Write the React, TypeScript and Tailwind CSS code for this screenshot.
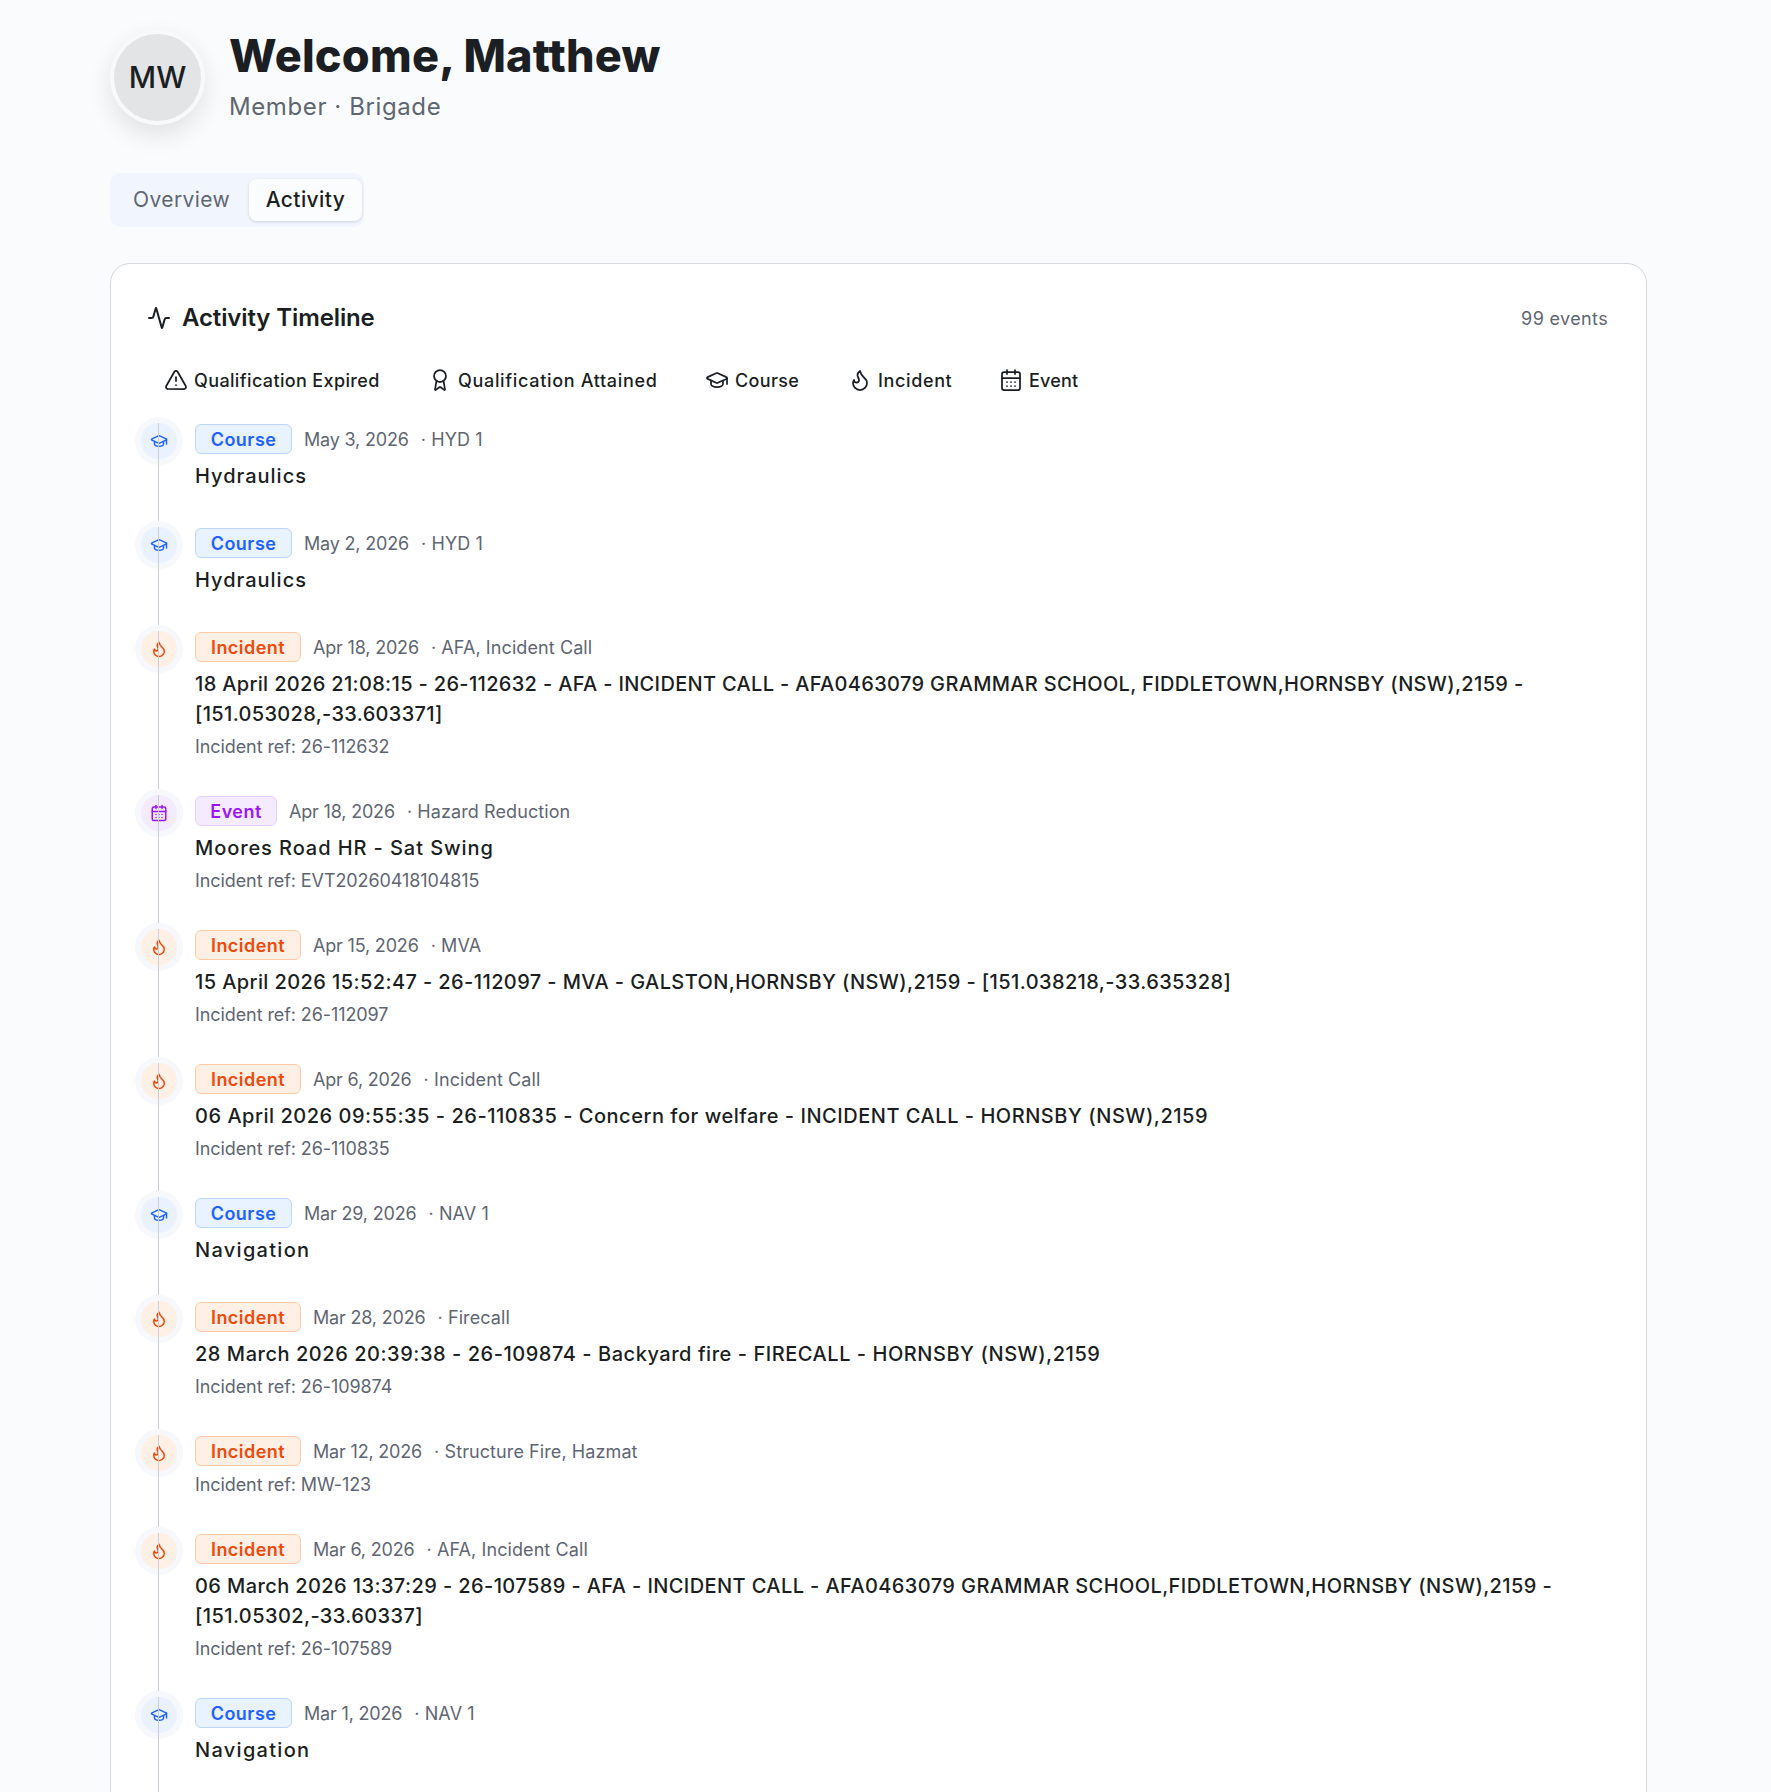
import { Activity, Award, CalendarDays, Flame, GraduationCap, TriangleAlert } from "lucide-react";

type Kind = "course" | "incident" | "event";

const kinds = {
  course: {
    label: "Course",
    Icon: GraduationCap,
    circle: "bg-[#eaf2ff] text-[#1f62ff]",
    badge: "w-[97px] bg-[#e9f2ff] border-[#bcd6ff] text-[#1f62ff]",
  },
  incident: {
    label: "Incident",
    Icon: Flame,
    circle: "bg-[#fff0e6] text-[#f0490c]",
    badge: "w-[106px] bg-[#fff0e6] border-[#ffc9a6] text-[#f0490c]",
  },
  event: {
    label: "Event",
    Icon: CalendarDays,
    circle: "bg-[#f5ebff] text-[#9a16f5]",
    badge: "w-[82px] bg-[#f5ebff] border-[#e5cfff] text-[#9a16f5]",
  },
};

const items: { kind: Kind; date: string; meta: string; title?: string; spacing?: string; ref?: string }[] = [
  { kind: "course", date: "May 3, 2026", meta: "HYD 1", title: "Hydraulics", spacing: "tracking-[0.05em]" },
  { kind: "course", date: "May 2, 2026", meta: "HYD 1", title: "Hydraulics", spacing: "tracking-[0.05em]" },
  {
    kind: "incident",
    date: "Apr 18, 2026",
    meta: "AFA, Incident Call",
    title:
      "18 April 2026 21:08:15 - 26-112632 - AFA - INCIDENT CALL - AFA0463079 GRAMMAR SCHOOL, FIDDLETOWN,HORNSBY (NSW),2159 - [151.053028,-33.603371]",
    spacing: "tracking-[0.0165em]",
    ref: "26-112632",
  },
  {
    kind: "event",
    date: "Apr 18, 2026",
    meta: "Hazard Reduction",
    title: "Moores Road HR - Sat Swing",
    spacing: "tracking-[0.046em]",
    ref: "EVT20260418104815",
  },
  {
    kind: "incident",
    date: "Apr 15, 2026",
    meta: "MVA",
    title: "15 April 2026 15:52:47 - 26-112097 - MVA - GALSTON,HORNSBY (NSW),2159 - [151.038218,-33.635328]",
    spacing: "tracking-[0.02em]",
    ref: "26-112097",
  },
  {
    kind: "incident",
    date: "Apr 6, 2026",
    meta: "Incident Call",
    title: "06 April 2026 09:55:35 - 26-110835 - Concern for welfare - INCIDENT CALL - HORNSBY (NSW),2159",
    spacing: "tracking-[0.026em]",
    ref: "26-110835",
  },
  { kind: "course", date: "Mar 29, 2026", meta: "NAV 1", title: "Navigation", spacing: "tracking-[0.065em]" },
  {
    kind: "incident",
    date: "Mar 28, 2026",
    meta: "Firecall",
    title: "28 March 2026 20:39:38 - 26-109874 - Backyard fire - FIRECALL - HORNSBY (NSW),2159",
    spacing: "tracking-[0.027em]",
    ref: "26-109874",
  },
  { kind: "incident", date: "Mar 12, 2026", meta: "Structure Fire, Hazmat", ref: "MW-123" },
  {
    kind: "incident",
    date: "Mar 6, 2026",
    meta: "AFA, Incident Call",
    title:
      "06 March 2026 13:37:29 - 26-107589 - AFA - INCIDENT CALL - AFA0463079 GRAMMAR SCHOOL,FIDDLETOWN,HORNSBY (NSW),2159 - [151.05302,-33.60337]",
    spacing: "tracking-[0.02em]",
    ref: "26-107589",
  },
  { kind: "course", date: "Mar 1, 2026", meta: "NAV 1", title: "Navigation", spacing: "tracking-[0.065em]" },
];

const legend = [
  { label: "Qualification Expired", Icon: TriangleAlert, cls: "w-[264px] tracking-[0.02em]" },
  { label: "Qualification Attained", Icon: Award, cls: "w-[277px] tracking-[0.037em]" },
  { label: "Course", Icon: GraduationCap, cls: "w-[143px] tracking-[0.02em]" },
  { label: "Incident", Icon: Flame, cls: "w-[151px] tracking-[0.035em]" },
  { label: "Event", Icon: CalendarDays, cls: "tracking-[0.01em]" },
];

export default function App() {
  return (
    <div className="h-[1792px] overflow-hidden bg-[#fafbfd] pl-[110px] pr-[124px] font-['Inter',sans-serif] text-[#1b1f23]">
      <div className="flex gap-[24px] pt-[30px]">
        <div className="flex size-[95px] shrink-0 items-center justify-center rounded-full border-[4px] border-[#f8f9fb] bg-[#e3e4e6] text-[30px] font-medium shadow-[0_10px_24px_rgba(0,0,0,0.1)]">
          MW
        </div>
        <div className="-mt-[2px]">
          <h1 className="text-[45px] font-extrabold leading-[56px] tracking-[0.005em]">Welcome, Matthew</h1>
          <p className="mt-[5px] text-[24px] leading-[36px] tracking-[0.025em] text-[#5f6673]">Member · Brigade</p>
        </div>
      </div>

      <div className="mt-[48px] flex h-[54px] w-[254px] items-center rounded-[10px] bg-[#f1f6fe] pl-[23px]">
        <span className="text-[21px] tracking-[0.02em] text-[#5f6673]">Overview</span>
        <span className="ml-auto mr-[2px] flex h-[42px] w-[113px] items-center justify-center rounded-[8px] bg-[#fbfcfe] text-[21px] font-medium tracking-[0.02em] shadow-[0_1px_3px_rgba(0,0,0,0.15)]">
          Activity
        </span>
      </div>

      <div className="mt-[36px] rounded-t-[20px] border border-[#d3d7de] bg-white pb-[60px] pl-[36px] pr-[38px] pt-[36px]">
        <div className="flex items-center justify-between">
          <h2 className="flex items-center gap-[11px] text-[24px] font-semibold leading-[36px] tracking-[-0.005em]">
            <Activity className="size-[24px]" strokeWidth={2} />
            Activity Timeline
          </h2>
          <span className="text-[18px] tracking-[0.02em] text-[#5f6673]">99 events</span>
        </div>

        <div className="mt-[29px] flex h-[30px] items-center pl-[17px]">
          {legend.map(({ label, Icon, cls }) => (
            <span key={label} className={`flex items-center gap-[6px] text-[18px] font-medium ${cls}`}>
              <Icon className="size-[24px]" strokeWidth={1.75} />
              {label}
            </span>
          ))}
        </div>

        <div className="-ml-[6px] mt-[28px]">
          {items.map((item, i) => {
            const k = kinds[item.kind];
            return (
              <div key={i} className="relative flex gap-[18px] pb-[36px] last:pb-[120px]">
                <div
                  className={`flex size-[36px] shrink-0 items-center justify-center rounded-full ring-[6px] ring-[#f6f8fb] ${k.circle}`}
                >
                  <k.Icon className="size-[18px]" strokeWidth={2} />
                </div>
                <div className="absolute bottom-0 left-[17px] top-0 w-px bg-[#c9ced8]" />
                <div className="min-w-0 flex-1 pt-[1px]">
                  <div className="flex h-[30px] items-center gap-[12px] text-[18px] text-[#5f6673]">
                    <span
                      className={`flex h-[30px] items-center justify-center rounded-[6px] border text-[18px] font-semibold tracking-[0.025em] ${k.badge}`}
                    >
                      {k.label}
                    </span>
                    <span className="tracking-[-0.01em]">{item.date}</span>
                    <span className="tracking-[0.005em]">· {item.meta}</span>
                  </div>
                  {item.title && (
                    <p className={`mt-[7px] text-[20px] font-medium leading-[30px] text-[#1b1f23] ${item.spacing}`}>
                      {item.title}
                    </p>
                  )}
                  {item.ref && (
                    <p
                      className={`text-[18px] leading-[25px] tracking-[-0.005em] text-[#5f6673] ${item.title ? "mt-[5px]" : "mt-[6px]"}`}
                    >
                      Incident ref: {item.ref}
                    </p>
                  )}
                </div>
              </div>
            );
          })}
        </div>
      </div>
    </div>
  );
}
